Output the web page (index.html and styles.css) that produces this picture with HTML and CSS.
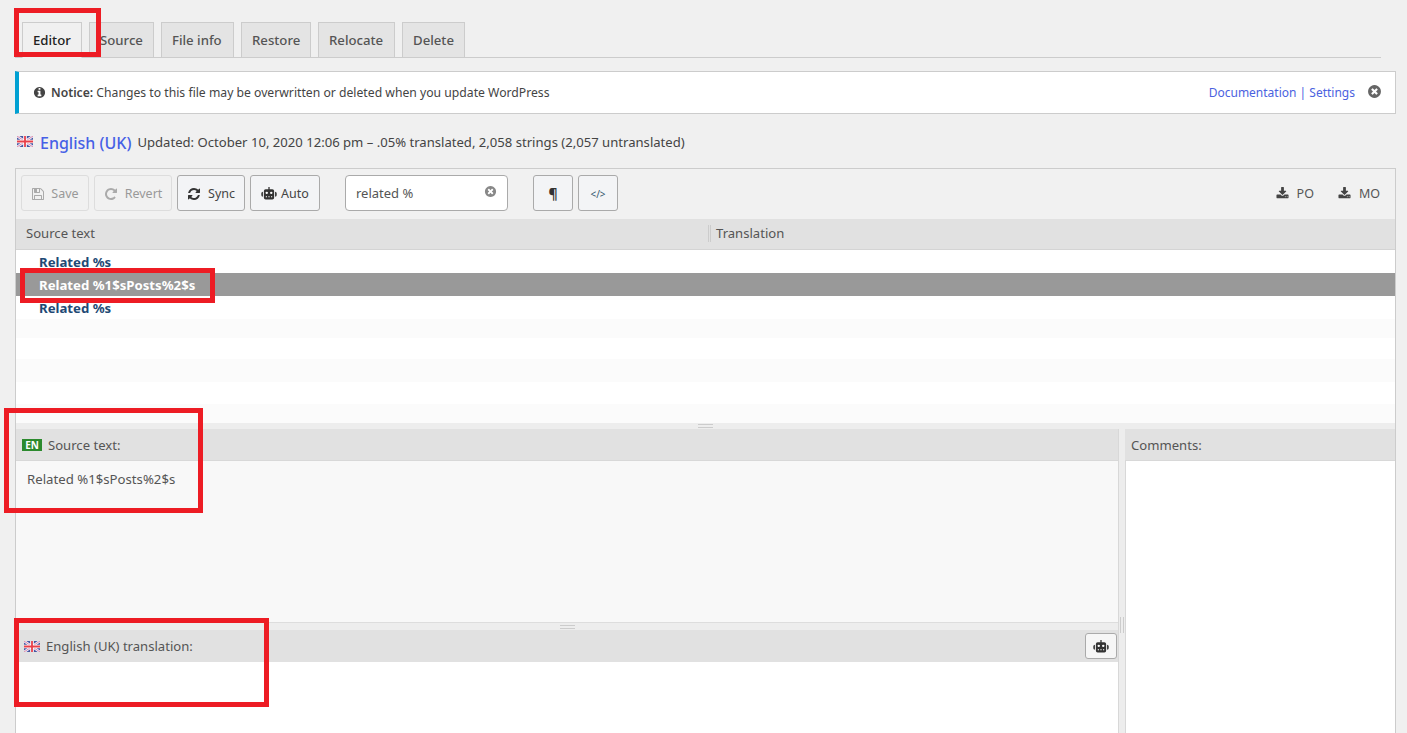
FILE: index.html
```html
<!DOCTYPE html>
<html lang="en">
<head>
<meta charset="utf-8">
<title>Editor</title>
<link rel="stylesheet" href="styles.css">
</head>
<body>
<svg class="defs" width="0" height="0" aria-hidden="true">
  <defs>
    <symbol id="i-info" viewBox="0 0 1792 1792"><path d="M1152 1376v-160q0-14-9-23t-23-9h-96v-512q0-14-9-23t-23-9h-320q-14 0-23 9t-9 23v160q0 14 9 23t23 9h96v320h-96q-14 0-23 9t-9 23v160q0 14 9 23t23 9h448q14 0 23-9t9-23zm-128-896v-160q0-14-9-23t-23-9h-192q-14 0-23 9t-9 23v160q0 14 9 23t23 9h192q14 0 23-9t9-23zm640 416q0 209-103 385.500t-279.500 279.500-385.500 103-385.500-103-279.500-279.500-103-385.500 103-385.500 279.500-279.500 385.500-103 385.500 103 279.500 279.500 103 385.500z"/></symbol>
    <symbol id="i-times" viewBox="0 0 1792 1792"><path d="M1277 1122q0-26-19-45l-181-181 181-181q19-19 19-45 0-27-19-46l-90-90q-19-19-46-19-26 0-45 19l-181 181-181-181q-19-19-45-19-27 0-46 19l-90 90q-19 19-19 46 0 26 19 45l181 181-181 181q-19 19-19 45 0 27 19 46l90 90q19 19 46 19 26 0 45-19l181-181 181 181q19 19 45 19 27 0 46-19l90-90q19-19 19-46zm387-226q0 209-103 385.500t-279.500 279.500-385.500 103-385.500-103-279.500-279.500-103-385.500 103-385.500 279.500-279.500 385.500-103 385.500 103 279.500 279.500 103 385.500z"/></symbol>
    <symbol id="i-save" viewBox="0 0 1792 1792"><path d="M512 1536h768v-384h-768v384zm896 0h128v-896q0-14-10-38.500t-20-34.500l-281-281q-10-10-34-20t-39-10v416q0 40-28 68t-68 28h-576q-40 0-68-28t-28-68v-416h-128v1280h128v-416q0-40 28-68t68-28h832q40 0 68 28t28 68v416zm-384-928v-320q0-13-9.500-22.500t-22.500-9.500h-192q-13 0-22.500 9.500t-9.500 22.500v320q0 13 9.500 22.500t22.500 9.500h192q13 0 22.500-9.500t9.500-22.500zm640 32v928q0 40-28 68t-68 28h-1344q-40 0-68-28t-28-68v-1344q0-40 28-68t68-28h928q40 0 88 20t76 48l280 280q28 28 48 76t20 88z"/></symbol>
    <symbol id="i-repeat" viewBox="0 0 1792 1792"><path d="M1664 256v448q0 26-19 45t-45 19h-448q-42 0-59-40-17-39 14-69l138-138q-148-137-349-137-104 0-198.500 40.500t-163.500 109.500-109.500 163.500-40.500 198.500 40.500 198.500 109.500 163.500 163.500 109.500 198.500 40.500q119 0 225-52t179-147q7-10 23-12 15 0 25 9l137 138q9 8 9.500 20.500t-7.500 22.500q-109 132-264 204.500t-327 72.500q-156 0-298-61t-245-164-164-245-61-298 61-298 164-245 245-164 298-61q147 0 284.500 55.500t244.500 156.500l130-129q29-31 70-14 39 17 39 59z"/></symbol>
    <symbol id="i-refresh" viewBox="0 0 1792 1792"><path d="M1639 1056q0 5-1 7-64 268-268 434.500t-478 166.500q-146 0-282.500-55t-243.500-157l-129 129q-19 19-45 19t-45-19-19-45v-448q0-26 19-45t45-19h448q26 0 45 19t19 45-19 45l-137 137q71 66 161 102t187 36q134 0 250-65t186-179q11-17 53-117 8-23 30-23h192q13 0 22.500 9.500t9.500 22.500zm25-800v448q0 26-19 45t-45 19h-448q-26 0-45-19t-19-45 19-45l138-138q-148-137-349-137-134 0-250 65t-186 179q-11 17-53 117-8 23-30 23h-199q-13 0-22.500-9.500t-9.500-22.500v-7q65-268 270-434.500t480-166.500q146 0 284 55.500t245 156.500l130-129q19-19 45-19t45 19 19 45z"/></symbol>
    <symbol id="i-download" viewBox="0 0 1792 1792"><path d="M1344 1344q0-26-19-45t-45-19-45 19-19 45 19 45 45 19 45-19 19-45zm256 0q0-26-19-45t-45-19-45 19-19 45 19 45 45 19 45-19 19-45zm128-224v320q0 40-28 68t-68 28h-1472q-40 0-68-28t-28-68v-320q0-40 28-68t68-28h465l135 136q58 56 136 56t136-56l136-136h464q40 0 68 28t28 68zm-325-569q17 41-14 70l-448 448q-18 19-45 19t-45-19l-448-448q-31-29-14-70 17-39 59-39h256v-448q0-26 19-45t45-19h256q26 0 45 19t19 45v448h256q42 0 59 39z"/></symbol>
    <symbol id="i-robot" viewBox="0 0 20 16"><path d="M9.200 0h1.600v2.600h3.400q2.200 0 2.200 2.200v8.600q0 2.200-2.200 2.200H5.800q-2.200 0-2.200-2.200V4.800q0-2.200 2.200-2.200h3.400z"/><path d="M0.400 7.800q0-1.800 2-2v6.400q-2-.2-2-2zM19.600 7.800q0-1.800-2-2v6.400q2-.2 2-2z"/><circle cx="7.200" cy="7.200" r="1.500" fill="#fff"/><circle cx="12.800" cy="7.200" r="1.500" fill="#fff"/><path d="M6 11.400h1.500v1.400H6zM9.250 11.400h1.500v1.400h-1.500zM12.500 11.400H14v1.400h-1.500z" fill="#fff"/></symbol>
    <symbol id="i-flag" viewBox="0 0 16 11"><rect width="16" height="11" fill="#46569f"/><path d="M0 0l16 11M16 0L0 11" stroke="#eef" stroke-width="2.600"/><path d="M0 0l16 11M16 0L0 11" stroke="#d9708a" stroke-width=".8"/><path d="M8 0v11M0 5.500h16" stroke="#fff" stroke-width="3.600"/><path d="M8 0v11M0 5.500h16" stroke="#e8404a" stroke-width="1.800"/></symbol>
  </defs>
</svg>

<main class="page">
  <nav class="tabs">
    <a class="tab tab-active">Editor</a>
    <a class="tab">Source</a>
    <a class="tab">File info</a>
    <a class="tab">Restore</a>
    <a class="tab">Relocate</a>
    <a class="tab">Delete</a>
  </nav>

  <section class="notice">
    <svg class="notice-icon"><use href="#i-info"/></svg>
    <p class="notice-text"><strong>Notice:</strong> Changes to this file may be overwritten or deleted when you update WordPress</p>
    <span class="notice-links"><a class="link">Documentation</a> | <a class="link">Settings</a></span>
    <svg class="notice-close"><use href="#i-times"/></svg>
  </section>

  <header class="locale">
    <svg class="flag"><use href="#i-flag"/></svg>
    <a class="locale-name">English (UK)</a>
    <span class="locale-meta">Updated: October 10, 2020 12:06 pm – .05% translated, 2,058 strings (2,057 untranslated)</span>
  </header>

  <section class="editor">
    <div class="toolbar">
      <div class="btn-group">
        <button class="btn btn-off btn-save"><svg class="ico"><use href="#i-save"/></svg>Save</button>
        <button class="btn btn-off btn-revert"><svg class="ico"><use href="#i-repeat"/></svg>Revert</button>
        <button class="btn btn-sync"><svg class="ico"><use href="#i-refresh"/></svg>Sync</button>
        <button class="btn btn-auto"><svg class="ico-robot"><use href="#i-robot"/></svg>Auto</button>
      </div>
      <div class="search"><span>related %</span><svg class="search-x"><use href="#i-times"/></svg></div>
      <div class="btn-group">
        <button class="btn btn-sq btn-para">¶</button>
        <button class="btn btn-sq btn-code">&lt;/&gt;</button>
      </div>
      <div class="downloads">
        <a class="dl"><svg class="ico-dl"><use href="#i-download"/></svg>PO</a>
        <a class="dl"><svg class="ico-dl"><use href="#i-download"/></svg>MO</a>
      </div>
    </div>

    <div class="columns">
      <div class="col-source">Source text</div>
      <div class="col-trans">Translation</div>
    </div>

    <div class="rows">
      <div class="row">Related %s</div>
      <div class="row row-sel">Related %1$sPosts%2$s</div>
      <div class="row">Related %s</div>
      <div class="row row-a"></div>
      <div class="row row-b"></div>
      <div class="row row-c"></div>
      <div class="row row-d"></div>
      <div class="row row-e"></div>
    </div>

    <div class="split-h"><i class="grip-h"></i></div>

    <div class="panes">
      <div class="pane-left">
        <div class="pane-head"><b class="lang">EN</b>Source text:</div>
        <div class="source-body">Related %1$sPosts%2$s</div>
        <div class="split-h split-inner"><i class="grip-h"></i></div>
        <div class="pane-head pane-head-tr">
          <svg class="flag flag-sm"><use href="#i-flag"/></svg>English (UK) translation:
          <button class="btn btn-robot"><svg class="ico-robot"><use href="#i-robot"/></svg></button>
        </div>
        <div class="trans-body"></div>
      </div>
      <div class="split-v"><i class="grip-v"></i></div>
      <div class="pane-right">
        <div class="pane-head">Comments:</div>
        <div class="comment-body"></div>
      </div>
    </div>
  </section>
</main>

<div class="mark mark-tab"></div>
<div class="mark mark-row"></div>
<div class="mark mark-src"></div>
<div class="mark mark-tr"></div>
</body>
</html>
```
FILE: styles.css
```css
* { box-sizing: border-box; }
html, body { margin: 0; height: 733px; overflow: hidden; }
body {
  position: relative;
  background: #f0f0f0;
  color: #444;
  font: 13.1px/18px "Noto Sans", "Open Sans", "Liberation Sans", sans-serif;
}
.defs { position: absolute; }
.page { padding: 22px 11px 0 15px; }

.tabs {
  display: flex;
  gap: 7px;
  height: 36px;
  padding-left: 7px;
  margin-right: 15px;
  border-bottom: 1px solid #ccc;
}
.tab {
  height: 36px;
  padding: 8px 10px 0;
  border: 1px solid #ccc;
  background: #e4e4e4;
  color: #555;
  font-weight: 500;
  font-size: 13.2px;
  white-space: nowrap;
}
.tab:nth-child(2) { width: 65px; }
.tab:nth-child(3) { width: 73px; }
.tab:nth-child(4) { width: 70px; }
.tab:nth-child(5) { width: 77px; }
.tab:nth-child(6) { width: 63px; }
.tab-active {
  width: 60px;
  background: #f0f0f0;
  border-bottom-color: #f0f0f0;
  color: #222;
}

.notice {
  display: flex;
  align-items: center;
  height: 43px;
  margin-top: 13px;
  padding: 0 14px;
  background: #fff;
  border: 1px solid #ccc;
  border-left: 4px solid #00a0d2;
  font-size: 12px;
}
.notice-icon { width: 13px; height: 13px; fill: #444; margin-right: 5px; }
.notice-text { margin: 0; flex: 1; color: #444; font-size: 12.2px; }
.notice-text strong { font-weight: 600; }
.notice-links { color: #4a62e0; margin-right: 12px; }
.link { color: #4a62e0; }
.notice-close { width: 15px; height: 15px; fill: #666; margin-top: -3px; margin-right: -1px; }

.locale {
  display: flex;
  align-items: center;
  height: 30px;
  margin-top: 14px;
  margin-bottom: 10px;
  padding-left: 2px;
}
.flag { width: 16px; height: 11px; margin-right: 7px; margin-top: -3px; }
.flag-sm { margin: 0 6px 0 2px; }
.locale-name { color: #4660e6; font-size: 16px; font-weight: 500; margin-right: 6px; }
.locale-meta { font-size: 13.1px; color: #444; margin-top: -2px; }

.editor {
  border: 1px solid #ccc;
  border-bottom: 0;
  height: 565px;
  background: #fff;
}

.toolbar {
  display: flex;
  align-items: center;
  height: 50px;
  padding: 0 15px 2px 5px;
  background: #f1f1f1;
}
.btn-group { display: flex; gap: 5px; }
.btn {
  display: flex;
  align-items: center;
  justify-content: center;
  height: 36px;
  padding: 1px 0 0;
  border: 1px solid #aaa;
  border-radius: 3px;
  background: #f3f4f6;
  color: #444;
  font: inherit;
  font-size: 12.5px;
}
.btn-off { border-color: #ddd; color: #999; background: #f1f1f1; }
.btn-off .ico { fill: #aaa; }
.btn-save { width: 68px; }
.btn-save .ico { margin-right: 6px; }
.btn-revert { width: 78px; }
.btn-sync { width: 68px; }
.btn-auto { width: 70px; }
.ico { width: 14px; height: 14px; margin-right: 7px; fill: #333; }
.ico-robot { width: 16px; height: 13px; margin-right: 4px; fill: #333; }
.btn-sq { width: 40px; }
.btn-para { font-size: 14px; font-weight: 700; color: #333; }
.btn-code { font-size: 10px; color: #33596e; }

.search {
  display: flex;
  align-items: center;
  justify-content: space-between;
  width: 163px;
  height: 36px;
  margin: 0 25px;
  padding: 0 10px;
  background: #fff;
  border: 1px solid #aaa;
  border-radius: 4px;
  color: #555;
  font-size: 13px;
}
.search-x { width: 13px; height: 13px; fill: #888; margin-top: -3px; }

.downloads { display: flex; gap: 24px; margin-left: auto; padding-top: 1px; }
.dl { display: flex; align-items: center; color: #555; font-size: 12.5px; }
.ico-dl { width: 13px; height: 13px; margin-right: 8px; fill: #444; }

.columns {
  display: flex;
  align-items: center;
  height: 31px;
  padding-bottom: 2px;
  background: #e1e1e1;
  border-bottom: 1px solid #d4d4d4;
  color: #555;
}
.col-source { width: 692px; padding-left: 10px; }
.col-trans {
  padding-left: 5px;
  border-left: 3px double #ccc;
  line-height: 17px;
}

.rows { height: 173px; }
.row {
  height: 23px;
  padding-left: 23px;
  background: #fff;
  color: #1f4a75;
  font-weight: 700;
  font-size: 13.2px;
  line-height: 24px;
}
.row-sel { background: #999; color: #fff; }
.row-a { height: 19px; background: #fbfbfb; }
.row-b { height: 21px; }
.row-c { height: 23px; background: #fbfbfb; }
.row-d { height: 22px; }
.row-e { height: 19px; background: #fbfbfb; }

.split-h {
  display: flex;
  justify-content: center;
  align-items: center;
  height: 6px;
  background: #ededed;
}
.grip-h {
  display: block;
  width: 15px;
  height: 4px;
  border-top: 1px solid #ccc;
  border-bottom: 1px solid #ccc;
}

.panes { display: flex; height: 304px; }
.pane-left { width: 1103px; display: flex; flex-direction: column; border-right: 1px solid #d8d8d8; }
.pane-head {
  display: flex;
  align-items: center;
  height: 32px;
  flex: none;
  padding-left: 6px;
  background: #e1e1e1;
  border-bottom: 1px solid #d8d8d8;
  color: #555;
}
.lang {
  width: 20px;
  height: 12px;
  margin-right: 6px;
  background: #2c8a2e;
  color: #fff;
  font-size: 10px;
  line-height: 12px;
  font-weight: 700;
  text-align: center;
}
.source-body {
  height: 162px;
  flex: none;
  padding: 9px 11px;
  background: #f8f8f8;
  border-bottom: 1px solid #ddd;
  color: #555;
  font-size: 13.2px;
}
.split-inner { height: 7px; }
.pane-head-tr { position: relative; height: 32px; border-bottom: 0; }
.btn-robot {
  position: absolute;
  right: 1px;
  top: 3px;
  width: 32px;
  height: 26px;
  background: #f6f6f6;
}
.btn-robot .ico-robot { margin: 0; }
.trans-body { flex: 1; background: #fff; }

.split-v {
  display: flex;
  align-items: flex-start;
  justify-content: center;
  width: 6px;
  background: #ededed;
}
.grip-v {
  display: block;
  width: 4px;
  height: 16px;
  margin-top: 188px;
  border-left: 1px solid #ccc;
  border-right: 1px solid #ccc;
}
.pane-right { flex: 1; display: flex; flex-direction: column; margin-right: 1px; border-left: 1px solid #d8d8d8; }
.pane-right .pane-head { margin-left: -1px; margin-right: -1px; }
.comment-body { flex: 1; background: #fff; }

.mark { position: absolute; border: 5px solid #ed1c24; pointer-events: none; }
.mark-tab { left: 14px; top: 8px; width: 87px; height: 49px; }
.mark-row { left: 20px; top: 268px; width: 195px; height: 35px; }
.mark-src { left: 4px; top: 408px; width: 199px; height: 105px; }
.mark-tr { left: 14px; top: 618px; width: 255px; height: 89px; }
```
